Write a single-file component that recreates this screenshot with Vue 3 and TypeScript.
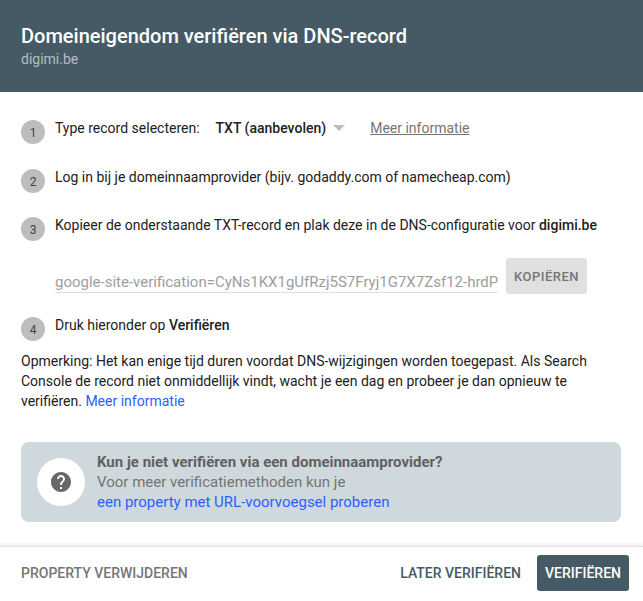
<script setup lang="ts">
const title = 'Domeineigendom verifiëren via DNS-record'
</script>

<template>
  <div class="dialog">
    <header class="head">
      <h1 class="title">{{ title }}</h1>
      <div class="sub">digimi.be</div>
    </header>
    <main class="body">
      <div class="step s1">
        <span class="num">1</span>
        <span class="txt">Type record selecteren:</span>
        <span class="select"><b>TXT (aanbevolen)</b><i class="caret"></i></span>
        <a class="more">Meer informatie</a>
      </div>
      <div class="step s2">
        <span class="num">2</span>
        <span class="txt">Log in bij je domeinnaamprovider (bijv. godaddy.com of namecheap.com)</span>
      </div>
      <div class="step s3">
        <span class="num">3</span>
        <span class="txt">Kopieer de onderstaande TXT-record en plak deze in de DNS-configuratie voor <b>digimi.be</b></span>
      </div>
      <div class="copy">
        <div class="field">google-site-verification=CyNs1KX1gUfRzj5S7Fryj1G7X7Zsf12-hrdP</div>
        <button class="kopie">KOPIËREN</button>
      </div>
      <div class="step s4">
        <span class="num">4</span>
        <span class="txt">Druk hieronder op <b>Verifiëren</b></span>
      </div>
      <p class="note">Opmerking: Het kan enige tijd duren voordat DNS-wijzigingen worden toegepast. Als Search Console de record niet onmiddellijk vindt, wacht je een dag en probeer je dan opnieuw te verifiëren. <a class="link">Meer informatie</a></p>
      <section class="help">
        <span class="bubble">
          <svg width="24" height="24" viewBox="0 0 24 24"><path fill="#686868" d="M12 2C6.48 2 2 6.48 2 12s4.48 10 10 10 10-4.48 10-10S17.52 2 12 2zm1 17h-2v-2h2v2zm2.07-7.75l-.9.92C13.45 12.9 13 13.5 13 15h-2v-.5c0-1.1.45-2.1 1.17-2.83l1.24-1.26c.37-.36.59-.86.59-1.41 0-1.1-.9-2-2-2s-2 .9-2 2H8c0-2.21 1.79-4 4-4s4 1.79 4 4c0 .88-.36 1.68-.93 2.25z"/></svg>
        </span>
        <div class="help-text">
          <div class="help-title">Kun je niet verifiëren via een domeinnaamprovider?</div>
          <div>Voor meer verificatiemethoden kun je</div>
          <a class="link">een property met URL-voorvoegsel proberen</a>
        </div>
      </section>
    </main>
    <footer class="foot">
      <button class="flat grey">PROPERTY VERWIJDEREN</button>
      <div class="right">
        <button class="flat dark">LATER VERIFIËREN</button>
        <button class="primary">VERIFIËREN</button>
      </div>
    </footer>
  </div>
</template>

<style scoped>
.dialog {
  width: 643px;
  height: 601px;
  display: flex;
  flex-direction: column;
  background: #fff;
  font-family: Roboto, "Liberation Sans", sans-serif;
  font-size: 14px;
  line-height: 20px;
  color: #212121;
  overflow: hidden;
}
.head {
  height: 92px;
  box-sizing: border-box;
  background: #455a64;
  padding: 23px 21px 0;
  flex: none;
}
.title {
  margin: 0;
  font-size: 20px;
  line-height: 26px;
  font-weight: 500;
  color: #fff;
}
.sub {
  font-size: 14px;
  line-height: 20px;
  color: rgba(255, 255, 255, 0.6);
}
.body {
  flex: 1;
  padding: 0 22px 0 21px;
}
.step {
  display: flex;
  align-items: flex-start;
}
.s1 { margin-top: 26px; }
.s2 { margin-top: 23px; }
.s3 { margin-top: 22px; }
.s4 { margin-top: 21px; }
.num {
  width: 24px;
  height: 24px;
  margin: 2px 10px 0 0;
  flex: none;
  border-radius: 50%;
  background: #bdbdbd;
  text-align: center;
  font-size: 12px;
  line-height: 27px;
  color: #424242;
}
.select {
  display: flex;
  align-items: center;
  margin-left: 16px;
}
.select b, .step b { font-weight: 500; }
.caret {
  margin-left: 7px;
  border-left: 6px solid transparent;
  border-right: 6px solid transparent;
  border-top: 6px solid #bdbdbd;
}
.more {
  margin-left: 25px;
  color: #757575;
  text-decoration: underline;
}
.copy {
  display: flex;
  margin: 17px 0 0 34px;
}
.field {
  width: 443px;
  height: 35px;
  box-sizing: border-box;
  padding-top: 14px;
  border-bottom: 1px solid #e0e0e0;
  color: #9e9e9e;
  font-size: 15px;
  white-space: nowrap;
  overflow: hidden;
}
.kopie {
  width: 81px;
  height: 36px;
  margin-left: 8px;
  border: 0;
  padding: 0;
  border-radius: 3px;
  background: #e0e0e0;
  color: #757575;
  font: 500 13px Roboto, sans-serif;
  letter-spacing: 0.5px;
}
.note {
  margin: 10px 0 0;
  line-height: 20px;
}
.link { color: #2962ff; }
.help {
  margin-top: 31px;
  height: 80px;
  display: flex;
  align-items: center;
  background: #cfd8dc;
  border-radius: 8px;
  padding-left: 16px;
  color: #757575;
  font-size: 15px;
}
.bubble {
  width: 48px;
  height: 48px;
  flex: none;
  margin-right: 12px;
  background: #fff;
  border-radius: 50%;
  display: flex;
  align-items: center;
  justify-content: center;
}
.help-title { font-weight: 700; color: #616161; }
.foot {
  flex: none;
  height: 55px;
  box-sizing: border-box;
  border-top: 1px solid #e0e0e0;
  box-shadow: 0 -2px 4px rgba(0, 0, 0, 0.08);
  display: flex;
  justify-content: space-between;
  align-items: center;
  padding: 0 14px 2px 21px;
}
.right { display: flex; align-items: center; }
button { font-family: Roboto, sans-serif; }
.flat {
  border: 0;
  background: none;
  padding: 0;
  font-size: 14px;
  font-weight: 500;
}
.grey { color: #757575; }
.dark { color: #455a64; margin-right: 16px; }
.primary {
  width: 92px;
  height: 36px;
  border: 0;
  border-radius: 3px;
  background: #455a64;
  color: #fff;
  font-size: 14px;
  font-weight: 500;
  padding: 0;
}
</style>
